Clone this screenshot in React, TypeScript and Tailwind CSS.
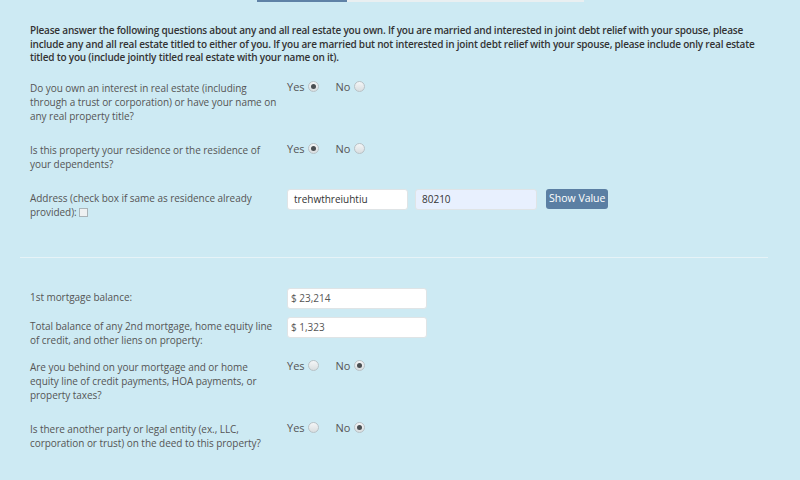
import React from "react";

const FONT = { fontFamily: '"Open Sans", "Liberation Sans", sans-serif' };

function Radio({ checked, className = "" }: { checked?: boolean; className?: string }) {
  return (
    <span
      className={`flex h-[11px] w-[11px] shrink-0 items-center justify-center rounded-full border border-[#b9c2c6] bg-gradient-to-b from-[#f4f6f7] to-[#d9dee0] ${className}`}
    >
      {checked && <span className="h-[5px] w-[5px] rounded-full bg-[#4a4f52]" />}
    </span>
  );
}

function YesNo({ value }: { value: "yes" | "no" }) {
  return (
    <div className="-mt-[1px] flex items-center text-[11px] leading-[14px] text-[#555]">
      <span>Yes</span>
      <Radio checked={value === "yes"} className="ml-[3px]" />
      <span className="ml-[17px]">No</span>
      <Radio checked={value === "no"} className="ml-[4px]" />
    </div>
  );
}

function Row({ label, children, className = "" }: { label: React.ReactNode; children: React.ReactNode; className?: string }) {
  return (
    <div className={`flex items-start ${className}`}>
      <div className="mr-[10px] w-[247px] shrink-0 text-[10px] leading-[14px] tracking-[-0.05px] text-[#555]">{label}</div>
      <div className="flex-1">{children}</div>
    </div>
  );
}

export default function App() {
  return (
    <div className="h-[480px] w-[800px] overflow-hidden bg-[#cdeaf3]" style={FONT}>
      {/* progress */}
      <div className="ml-[257px] flex h-[2px] w-[327px]">
        <div className="w-[90px] bg-[#5f82a6]" />
        <div className="flex-1 bg-[#e9eff1]" />
      </div>

      <p className="mx-[30px] mt-[22px] text-[10px] font-semibold leading-[13.5px] tracking-[-0.2px] text-[#333]">
        Please answer the following questions about any and all real estate you own. If you are married and interested in joint debt relief with your spouse, please include any and all real estate titled to either of you. If you are married but not interested in joint debt relief with your spouse, please include only real estate titled to you (include jointly titled real estate with your name on it).
      </p>

      <div className="ml-[30px] mt-[16px]">
        <Row label="Do you own an interest in real estate (including through a trust or corporation) or have your name on any real property title?" className="h-[62px]">
          <YesNo value="yes" />
        </Row>
        <Row label="Is this property your residence or the residence of your dependents?" className="h-[48px]">
          <YesNo value="yes" />
        </Row>
        <Row
          label={
            <span>
              Address (check box if same as residence already provided):{" "}
              <span className="inline-block h-[9px] w-[9px] translate-y-[1px] border border-[#a9b3b7] bg-[#eef1f2] align-baseline" />
            </span>
          }
        >
          <div className="-mt-[2px] flex items-center">
            <div className="flex h-[21px] w-[121px] items-center rounded-[3px] border border-[#dfe4e6] bg-white px-[6px] text-[10px] text-[#333]">
              trehwthreiuhtiu
            </div>
            <div className="ml-[7px] flex h-[21px] w-[122px] items-center rounded-[3px] border border-[#dfe4e6] bg-[#e8f0fe] px-[6px] text-[10px] text-[#333]">
              80210
            </div>
            <button className="ml-[9px] h-[20px] rounded-[3px] bg-[#5b7fa3] px-[3px] text-[10.5px] text-white">
              Show Value
            </button>
          </div>
        </Row>
      </div>

      <div className="ml-[20px] mr-[32px] mt-[38px] h-[1px] bg-[#e6f3f7]" />

      <div className="ml-[30px] mt-[32px]">
        <Row label="1st mortgage balance:" className="h-[29px]">
          <div className="-mt-[2px] flex h-[21px] w-[140px] items-center rounded-[3px] border border-[#dfe4e6] bg-white px-[3px] text-[10px] text-[#555]">
            $ 23,214
          </div>
        </Row>
        <Row label="Total balance of any 2nd mortgage, home equity line of credit, and other liens on property:" className="h-[41px]">
          <div className="-mt-[2px] flex h-[21px] w-[140px] items-center rounded-[3px] border border-[#dfe4e6] bg-white px-[3px] text-[10px] text-[#555]">
            $ 1,323
          </div>
        </Row>
        <Row label="Are you behind on your mortgage and or home equity line of credit payments, HOA payments, or property taxes?" className="h-[62px]">
          <YesNo value="no" />
        </Row>
        <Row label="Is there another party or legal entity (ex., LLC, corporation or trust) on the deed to this property?">
          <YesNo value="no" />
        </Row>
      </div>
    </div>
  );
}
